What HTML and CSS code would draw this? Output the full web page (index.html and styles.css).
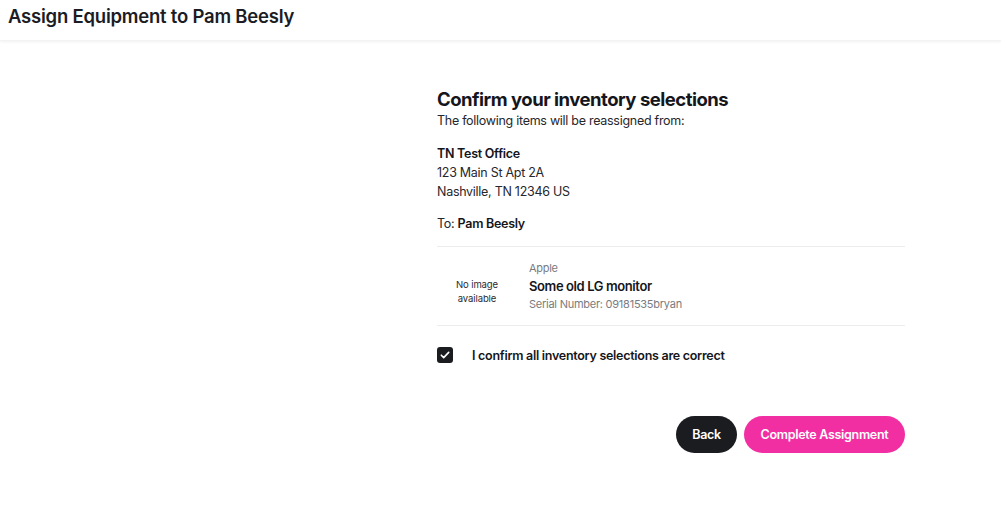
FILE: index.html
```html
<!DOCTYPE html>
<html lang="en">
<head>
<meta charset="utf-8">
<title>Assign Equipment</title>
<link rel="stylesheet" href="styles.css">
</head>
<body>
<header class="topbar">
  <h1 class="page-title">Assign Equipment to Pam Beesly</h1>
</header>
<main class="content">
  <section class="confirm">
    <h2 class="confirm-title">Confirm your inventory selections</h2>
    <p class="intro">The following items will be reassigned from:</p>
    <div class="address">
      <div class="strong">TN Test Office</div>
      <div>123 Main St Apt 2A</div>
      <div>Nashville, TN 12346 US</div>
    </div>
    <p class="to">To: <span class="strong">Pam Beesly</span></p>
    <div class="item">
      <div class="thumb">No image<br>available</div>
      <div class="item-info">
        <div class="brand">Apple</div>
        <div class="item-name">Some old LG monitor</div>
        <div class="serial">Serial Number: 09181535bryan</div>
      </div>
    </div>
    <label class="confirm-check">
      <span class="box"><svg viewBox="0 0 16 16" width="16" height="16"><path d="M4.3 8.2l2.4 2.4 5-5.2" fill="none" stroke="#fff" stroke-width="1.6" stroke-linecap="round" stroke-linejoin="round"/></svg></span>
      <span class="check-label">I confirm all inventory selections are correct</span>
    </label>
    <div class="actions">
      <button class="btn btn-dark">Back</button>
      <button class="btn btn-pink">Complete Assignment</button>
    </div>
  </section>
</main>
</body>
</html>
```
FILE: styles.css
```css
* { box-sizing: border-box; }
html, body { margin: 0; padding: 0; background: #fff; }
body {
  font-family: Inter, "Liberation Sans", sans-serif;
  color: #1b1c20;
  width: 1001px;
  height: 518px;
  overflow: hidden;
}
.topbar {
  height: 41px;
  display: flex;
  align-items: center;
  padding-left: 8px;
  box-shadow: 0 1px 3px rgba(0,0,0,0.06);
  border-bottom: 1px solid #f3f3f4;
}
.page-title {
  margin: 0 0 9px;
  font-size: 18.5px;
  font-weight: 600;
  letter-spacing: -0.22px;
  color: #1b1c24;
}
.content {
  display: flex;
  justify-content: flex-start;
  padding-left: 437px;
  padding-top: 46px;
}
.confirm { width: 468px; font-size: 12.5px; letter-spacing: -0.28px; }
.confirm-title {
  margin: 0;
  font-size: 18.5px;
  font-weight: 700;
  line-height: 24px;
  letter-spacing: -0.5px;
  color: #15161b;
}
.intro { margin: 1px 0 0; line-height: 18px; color: #26272c; }
.address { margin-top: 14px; line-height: 19px; color: #26272c; }
.strong { font-weight: 600; color: #15161b; }
.to { margin: 13px 0 0; line-height: 19px; color: #26272c; }
.item {
  margin-top: 13px;
  border-top: 1px solid #ececee;
  border-bottom: 1px solid #ececee;
  height: 80px;
  display: flex;
  align-items: center;
}
.thumb {
  width: 80px;
  margin-top: 12px;
  text-align: center;
  font-size: 9.5px;
  line-height: 14px;
  color: #2a2b30;
  letter-spacing: -0.1px;
}
.item-info { margin-left: 12px; display: flex; flex-direction: column; }
.brand { font-size: 11px; color: #7a7b80; line-height: 17px; }
.item-name { font-size: 13px; font-weight: 600; line-height: 19px; color: #15161b; letter-spacing: -0.4px; }
.serial { font-size: 11px; color: #7a7b80; line-height: 17px; letter-spacing: -0.25px; }
.confirm-check {
  display: flex;
  align-items: center;
  margin-top: 21px;
  gap: 19px;
}
.box {
  width: 16px; height: 16px;
  background: #1b1c20;
  border-radius: 3px;
  display: flex;
}
.check-label { font-weight: 600; font-size: 12.5px; color: #15161b; }
.actions {
  display: flex;
  justify-content: flex-end;
  gap: 7px;
  margin-top: 53px;
}
.btn {
  height: 37px;
  border: none;
  border-radius: 19px;
  font-family: inherit;
  font-size: 12.5px;
  font-weight: 600;
  color: #fff;
  padding: 0;
  white-space: nowrap;
  letter-spacing: -0.3px;
}
.btn-dark { background: #1b1c20; width: 61px; }
.btn-pink { background: #f22ea3; width: 161px; }
```
